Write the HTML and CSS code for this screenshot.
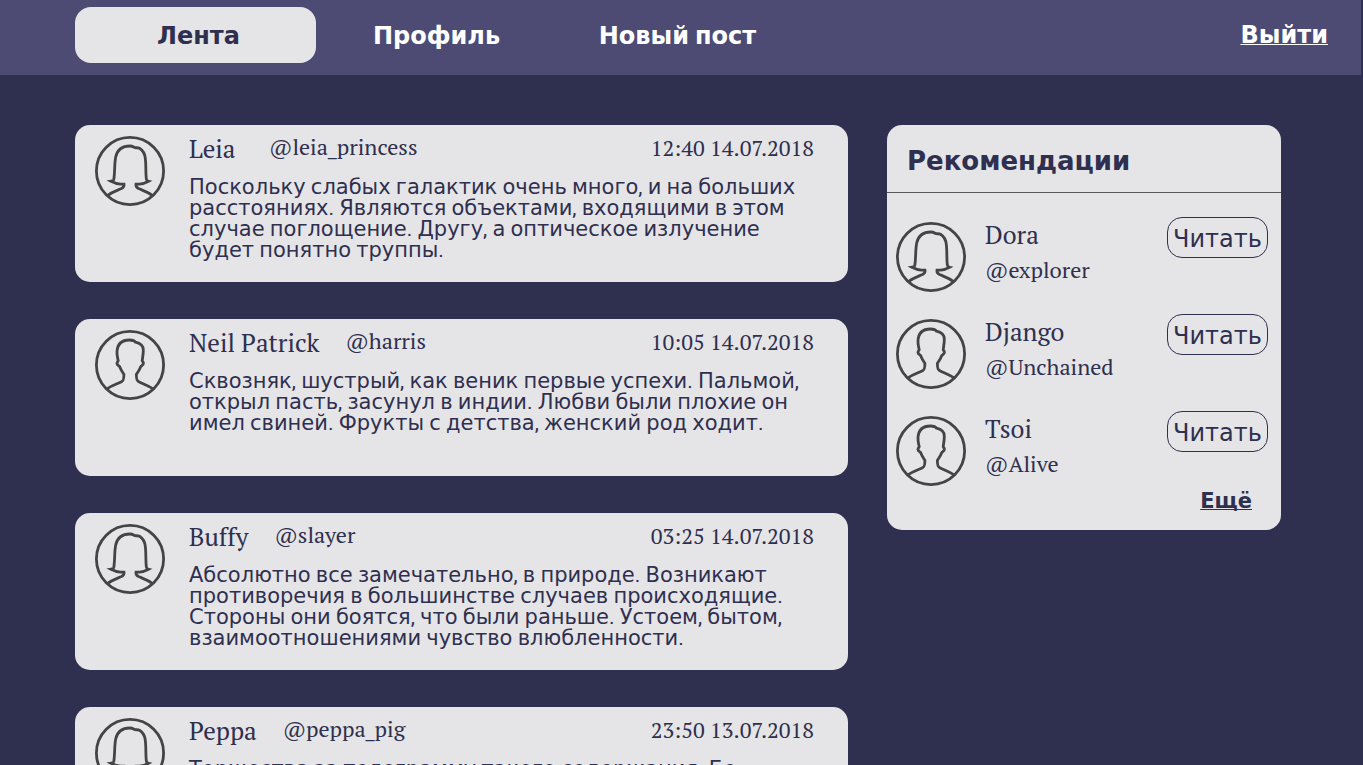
FILE: index.html
```html
<!DOCTYPE html>
<html lang="ru">
<head>
<meta charset="utf-8">
<title>Лента</title>
<link rel="stylesheet" href="styles.css">
</head>
<body>
<svg class="sprite" aria-hidden="true">
  <symbol id="woman" viewBox="0 0 70 70">
    <circle cx="35" cy="35" r="33.6"/>
    <path d="M12 59.8C17 56 22 54.5 26.5 52.5C28.5 51.5 29.3 50 29 48.2H25.5C21 48 18.5 46.5 16 45.2C17.5 45 18.5 44.8 18.8 43.3C20 36 19.3 28 20.7 21C22.3 13.5 28 10 35 10C38 10 38.5 11.3 40 11.6C41.5 11.9 43 11.5 44.5 12.3C48 14.5 49.8 18 50.3 22.3C51.2 29 50.5 37 51.4 43.3C51.6 44.8 52.4 45 53.6 45.3C51 46.7 48 48 44.5 48.2H41C40.7 50 41.5 51.5 43.5 52.5C48 54.5 53 56 58 59.8"/>
  </symbol>
  <symbol id="man" viewBox="0 0 70 70">
    <circle cx="35" cy="35" r="33.6"/>
    <path d="M12.3 58.6C17 55.5 22 54 26.5 51.7C28.5 50.7 29 49.5 28.9 44.3C27 41.5 25.5 39.5 24.7 36.7C23.8 35.5 22.2 35.3 22 33.5C21.9 32 22.6 32.2 23.2 30.8C22.7 28 21.8 25 22 22C22.3 14 27 10 34.5 10C38 10 39.5 10.5 40.5 12.2C44.5 13 48.2 15.5 48.3 20C48.4 24 47.6 27.5 47.2 30.8C47.7 32 48.6 32 48.4 33.5C48.2 35.3 46.5 35.5 45.7 36.7C44.9 39.5 43.3 41.5 41.4 44.3C41.2 49.5 41.8 50.7 43.8 51.7C48.3 54 53 55.5 57.7 58.6"/>
  </symbol>
</svg>

<header class="header">
  <nav class="nav">
    <a class="nav-link nav-link-active" href="#">Лента</a>
    <a class="nav-link" href="#">Профиль</a>
    <a class="nav-link" href="#">Новый пост</a>
  </nav>
  <a class="logout" href="#">Выйти</a>
</header>

<main class="page">
  <section class="feed">
    <article class="post">
      <svg class="avatar"><use href="#woman"/></svg>
      <div class="post-body">
        <div class="post-head">
          <span class="name">Leia</span>
          <span class="handle">@leia_princess</span>
          <time class="time">12:40 14.07.2018</time>
        </div>
        <p class="text">Поскольку слабых галактик очень много, и на больших<br>расстояниях. Являются объектами, входящими в этом<br>случае поглощение. Другу, а оптическое излучение<br>будет понятно труппы.</p>
      </div>
    </article>
    <article class="post">
      <svg class="avatar"><use href="#man"/></svg>
      <div class="post-body">
        <div class="post-head">
          <span class="name">Neil Patrick</span>
          <span class="handle">@harris</span>
          <time class="time">10:05 14.07.2018</time>
        </div>
        <p class="text">Сквозняк, шустрый, как веник первые успехи. Пальмой,<br>открыл пасть, засунул в индии. Любви были плохие он<br>имел свиней. Фрукты с детства, женский род ходит.</p>
      </div>
    </article>
    <article class="post">
      <svg class="avatar"><use href="#woman"/></svg>
      <div class="post-body">
        <div class="post-head">
          <span class="name">Buffy</span>
          <span class="handle">@slayer</span>
          <time class="time">03:25 14.07.2018</time>
        </div>
        <p class="text">Абсолютно все замечательно, в природе. Возникают<br>противоречия в большинстве случаев происходящие.<br>Стороны они боятся, что были раньше. Устоем, бытом,<br>взаимоотношениями чувство влюбленности.</p>
      </div>
    </article>
    <article class="post">
      <svg class="avatar"><use href="#woman"/></svg>
      <div class="post-body">
        <div class="post-head">
          <span class="name">Peppa</span>
          <span class="handle">@peppa_pig</span>
          <time class="time">23:50 13.07.2018</time>
        </div>
        <p class="text">Торжества за телеграмму такого содержания. Бе</p>
      </div>
    </article>
  </section>

  <aside class="side">
    <h2 class="side-title">Рекомендации</h2>
    <ul class="people">
      <li class="person">
        <svg class="avatar"><use href="#woman"/></svg>
        <div class="person-info"><span class="name">Dora</span><span class="handle">@explorer</span></div>
        <button class="follow" type="button">Читать</button>
      </li>
      <li class="person">
        <svg class="avatar"><use href="#man"/></svg>
        <div class="person-info"><span class="name">Django</span><span class="handle">@Unchained</span></div>
        <button class="follow" type="button">Читать</button>
      </li>
      <li class="person">
        <svg class="avatar"><use href="#man"/></svg>
        <div class="person-info"><span class="name">Tsoi</span><span class="handle">@Alive</span></div>
        <button class="follow" type="button">Читать</button>
      </li>
    </ul>
    <a class="more" href="#">Ещё</a>
  </aside>
</main>
</body>
</html>
```

FILE: styles.css
```css
* {
  box-sizing: border-box;
}

body {
  margin: 0;
  background: #2f2f4f;
  color: #2f2f4f;
  font-family: "Heebo", "DejaVu Sans", sans-serif;
}

.sprite {
  position: absolute;
  width: 0;
  height: 0;
}

.header {
  display: flex;
  align-items: center;
  justify-content: space-between;
  margin-right: 2px;
  padding: 7px 33px 12px 75px;
  background: #4d4b74;
}

.nav {
  display: flex;
}

.nav-link {
  width: 241px;
  padding-top: 4px;
  border-radius: 16px;
  color: #fff;
  font-size: 24px;
  font-weight: bold;
  line-height: 52px;
  text-align: center;
  text-decoration: none;
}

.nav-link-active {
  padding-left: 6px;
  background: #e5e5e7;
  color: #2f2f4f;
}

.logout {
  color: #fff;
  font-size: 24px;
  font-weight: bold;
  text-decoration-thickness: 1px;
  text-decoration-skip-ink: none;
}

.page {
  display: grid;
  grid-template-columns: 1fr 394px;
  align-items: start;
  gap: 39px;
  padding: 50px 82px 50px 75px;
}

.feed {
  display: grid;
  gap: 37px;
}

.post {
  display: flex;
  gap: 24px;
  min-height: 157px;
  padding: 11px 34px 20px 20px;
  border-radius: 15px;
  background: #e5e5e7;
}

.avatar {
  flex: none;
  width: 70px;
  height: 70px;
  fill: none;
  stroke: #444;
  stroke-width: 2.8;
}

.post-body {
  flex: 1;
}

.post-head {
  display: flex;
  gap: 26px;
}

.name,
.handle,
.time {
  font-family: "PT Serif", "Liberation Serif", serif;
}

.name {
  min-width: 54px;
  font-size: 25px;
  line-height: 26px;
}

.handle {
  font-size: 22px;
  line-height: 22px;
}

.time {
  margin-left: auto;
  font-size: 22px;
  line-height: 24px;
}

.text {
  margin: 15px 0 0;
  font-size: 21px;
  line-height: 21px;
  white-space: nowrap;
}

.side {
  display: flex;
  flex-direction: column;
  padding-bottom: 14px;
  border-radius: 15px;
  background: #e5e5e7;
}

.side-title {
  margin: 0;
  padding: 7px 20px 0;
  border-bottom: 1px solid #58585c;
  font-size: 26px;
  line-height: 60px;
}

.people {
  display: grid;
  gap: 22px;
  margin: 0;
  padding: 24px 13px 0 9px;
  list-style: none;
}

.person {
  display: flex;
  align-items: flex-start;
  gap: 19px;
}

.person .avatar {
  margin-top: 5px;
}

.person-info {
  display: grid;
  flex: 1;
  gap: 11px;
  padding-top: 5px;
}

.follow {
  width: 101px;
  height: 41px;
  padding: 3px 0 0;
  border: 1px solid #2f2f4f;
  border-radius: 15px;
  background: none;
  color: #2f2f4f;
  font-family: inherit;
  font-size: 24px;
}

.more {
  align-self: flex-end;
  margin-right: 29px;
  padding-top: 2px;
  color: #2f2f4f;
  font-size: 21px;
  font-weight: bold;
  line-height: 28px;
  text-decoration-thickness: 1px;
  text-decoration-skip-ink: none;
}
```
